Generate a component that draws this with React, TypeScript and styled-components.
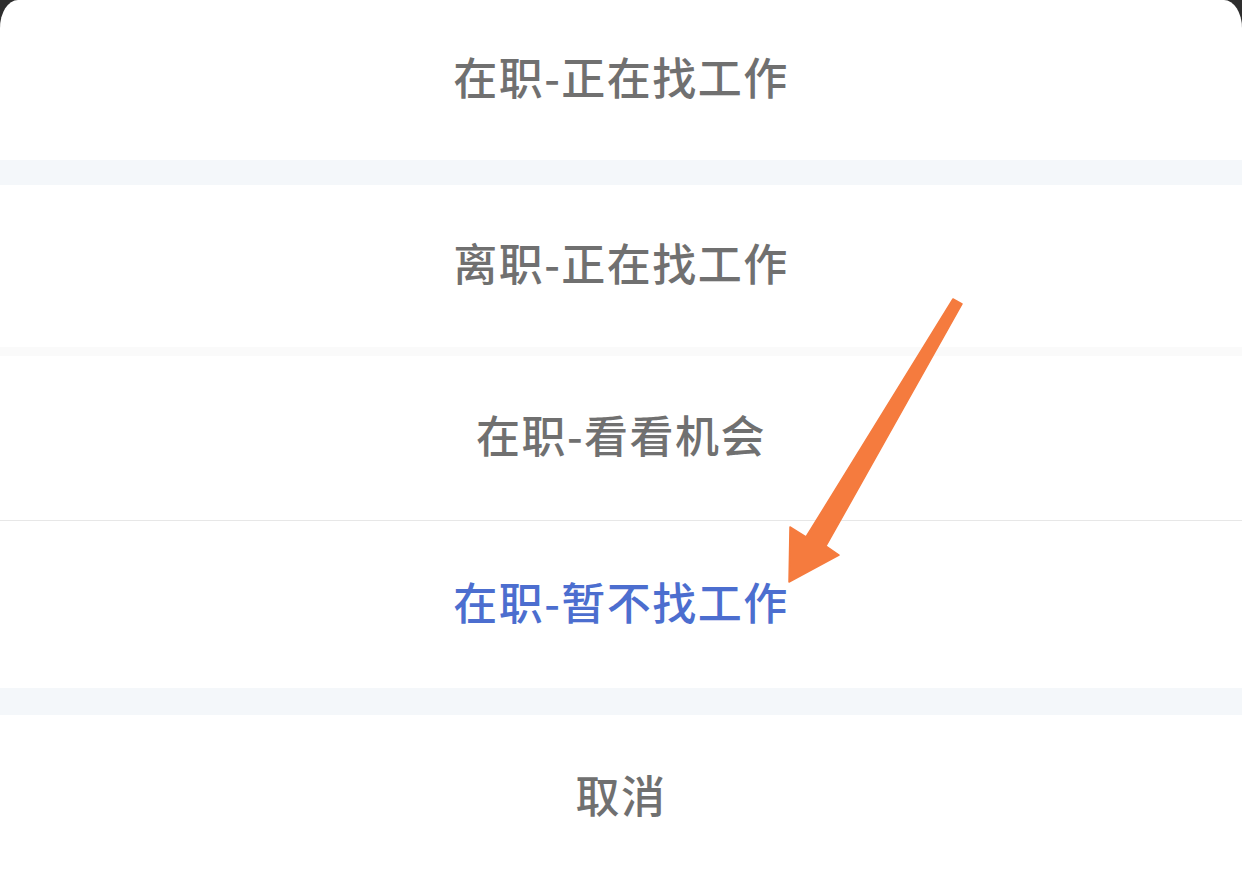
import React from 'react'
import styled, { createGlobalStyle } from 'styled-components'

const GlobalStyle = createGlobalStyle`
    html, body {
        margin: 0;
        padding: 0;
        background: #2e2e2e;
    }
    body {
        font-family: 'Noto Sans CJK SC', 'Noto Sans', sans-serif;
    }
`

const Sheet = styled.div`
    position: relative;
    width: 1242px;
    height: 880px;
    overflow: hidden;
    background: #ffffff;
    border-radius: 18px 18px 0 0 / 28px 28px 0 0;
    display: flex;
    flex-direction: column;
`

const Option = styled.div<{ $height: number; $active?: boolean }>`
    height: ${p => p.$height}px;
    box-sizing: border-box;
    padding-bottom: 8px;
    flex-shrink: 0;
    display: flex;
    align-items: center;
    justify-content: center;
    font-size: 44px;
    font-weight: 500;
    letter-spacing: 1.5px;
    color: ${p => (p.$active ? '#4c6ecf' : '#707070')};
`

const Band = styled.div<{ $height: number }>`
    height: ${p => p.$height}px;
    flex-shrink: 0;
    background: #f4f7fa;
`

const ThinBand = styled.div`
    height: 9px;
    flex-shrink: 0;
    background: #fafafa;
`

const Line = styled.div`
    height: 1px;
    flex-shrink: 0;
    background: #e7e7e7;
`

const Arrow = styled.svg`
    position: absolute;
    left: 0;
    top: 0;
    pointer-events: none;
`

const App = () => {
    return (
        <>
            <GlobalStyle />
            <Sheet>
                <Option $height={160}>在职-正在找工作</Option>
                <Band $height={25} />
                <Option $height={162}>离职-正在找工作</Option>
                <ThinBand />
                <Option $height={164}>在职-看看机会</Option>
                <Line />
                <Option $height={167} $active>在职-暂不找工作</Option>
                <Band $height={27} />
                <Option $height={165}>取消</Option>
                <Arrow width="1242" height="880" viewBox="0 0 1242 880">
                    <polygon
                        points="953,299 962,304 826,546 839,555 789,582 790,527 806,537"
                        fill="#f57b3e"
                        strokeLinejoin="round"
                        stroke="#f57b3e"
                        strokeWidth="1.5"
                    />
                </Arrow>
            </Sheet>
        </>
    )
}

export default App
